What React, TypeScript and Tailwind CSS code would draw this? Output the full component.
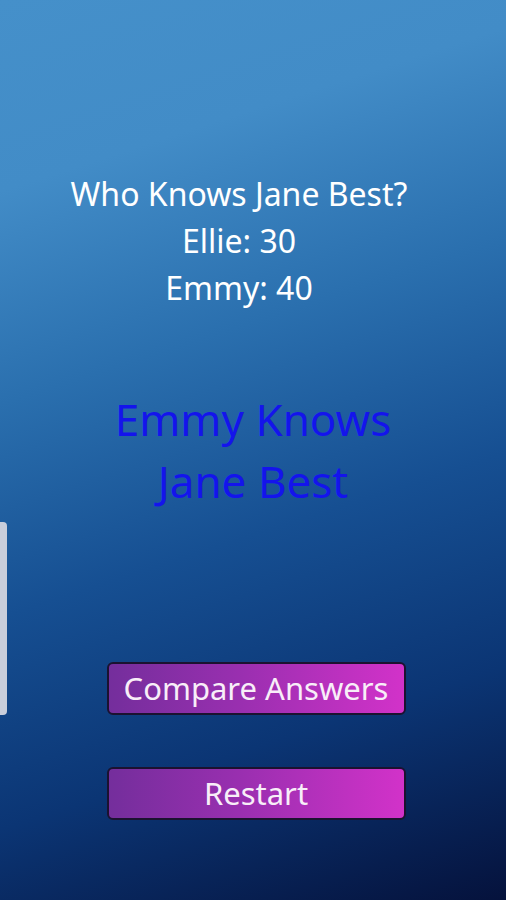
import React from "react";

const App: React.FC = () => {
  return (
    <div
      className="relative h-[900px] w-[506px] overflow-hidden bg-[linear-gradient(162deg,#4590ca_0%,#428cc7_18%,#2a6fae_38%,#164f92_58%,#0b3574_78%,#05123c_100%)] text-center"
      style={{ fontFamily: '"Noto Sans", "Open Sans", sans-serif' }}
    >
      <div className="flex flex-col items-center pt-[170px]">
        <div className="pr-[28px] text-[32px] leading-[47px] text-white">
          <p>Who Knows Jane Best?</p>
          <p>Ellie: 30</p>
          <p>Emmy: 40</p>
        </div>

        <div className="mt-[77px] w-[320px] text-[44px] leading-[62px] text-[#1414ec]">
          Emmy Knows Jane Best
        </div>

        <button className="ml-[6px] mt-[150px] h-[53px] w-[299px] rounded-[6px] border-2 border-[#1b1230] bg-[linear-gradient(90deg,#742e9c_0%,#9a2fb0_45%,#d232c9_100%)] text-[31px] leading-none text-[#f8eef8]">
          Compare Answers
        </button>
        <button className="ml-[6px] mt-[52px] h-[53px] w-[299px] rounded-[6px] border-2 border-[#1b1230] bg-[linear-gradient(90deg,#742e9c_0%,#9a2fb0_45%,#d232c9_100%)] text-[31px] leading-none text-[#f8eef8]">
          Restart
        </button>
      </div>

      <div className="absolute left-0 top-[522px] h-[193px] w-[7px] rounded-r-[4px] bg-[#c9cedb]" />
    </div>
  );
};

export default App;
